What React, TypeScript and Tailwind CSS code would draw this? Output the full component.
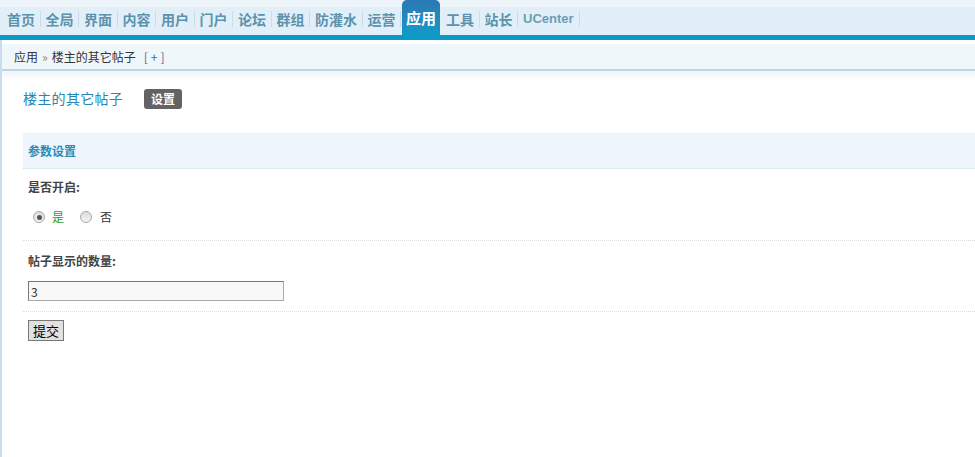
const NAV = ["首页", "全局", "界面", "内容", "用户", "门户", "论坛", "群组", "防灌水", "运营", "应用", "工具", "站长"];

const font = "font-['Microsoft_YaHei','Noto_Sans_CJK_SC',sans-serif]";

function Radio({ checked }: { checked?: boolean }) {
  return (
    <span className="flex h-[12px] w-[12px] items-center justify-center rounded-full border border-[#a9a9a9] bg-gradient-to-b from-[#dcdcdc] to-[#f4f4f4]">
      {checked && <span className="h-[5px] w-[5px] rounded-full bg-[#555]" />}
    </span>
  );
}

export default function App() {
  return (
    <div className={`h-[457px] w-[975px] overflow-hidden bg-white text-[12px] text-[#333] ${font}`}>
      {/* Top nav */}
      <div className="h-[35px] bg-[#edf5fb] pt-[7px]">
        <div className="flex h-[28px] items-stretch bg-[#e2eff8] pl-[2px]">
          {NAV.map((n) =>
            n === "应用" ? (
              <div
                key={n}
                className="-mt-[7px] ml-[1px] mr-[1px] flex h-[35px] items-center rounded-t-[5px] bg-gradient-to-b from-[#2a78b4] to-[#0f9ac7] px-[4px] pt-[2px] text-[15px] font-bold text-white"
              >
                {n}
              </div>
            ) : (
              <div key={n} className="flex items-center pb-[4px]">
                <span className="pl-[5px] pr-[4.5px] text-[14px] font-bold leading-[18px] text-[#5b93ad]">{n}</span>
                <span className="h-[16px] w-px bg-[#c9dcea]" />
              </div>
            )
          )}
          <div className="flex items-center pb-[4px]">
            <span className="pl-[5px] pr-[5px] font-['Liberation_Sans',sans-serif] text-[13px] font-bold text-[#6b9db4]">UCenter</span>
            <span className="h-[16px] w-px bg-[#c9dcea]" />
          </div>
        </div>
      </div>
      <div className="h-[5px] bg-[#0b9ac5]" />

      <div className="border-l-2 border-[#c9deec]">
        {/* Breadcrumb */}
        <div className="pt-[4px]">
          <div className="flex h-[27px] items-center border-b-2 border-[#c2d4e2] bg-[#f0f7fb] pl-[12px] text-[12px] text-[#333]">
            <span>应用</span>
            <span className="mx-[4px] text-[#888]">»</span>
            <span>楼主的其它帖子</span>
            <span className="ml-[8px] tracking-[3px] text-[#3a70a8]">[+]</span>
          </div>
          <div className="h-[10px] bg-gradient-to-b from-[#eef5fa] to-white" />
        </div>

        {/* Title */}
        <div className="flex items-center pl-[21px] pt-[7px]">
          <span className="text-[14px] tracking-[0.3px] text-[#2688b6]">楼主的其它帖子</span>
          <span className="ml-[21px] flex h-[20px] w-[38px] items-center justify-center rounded-[3px] bg-[#636363] text-[12px] font-bold text-white">
            设置
          </span>
        </div>

        {/* Settings table */}
        <div className="ml-[21px] mt-[24px]">
          <div className="flex h-[36px] items-center border-b border-dotted border-[#d6e2ea] bg-[#eef5fc] pl-[5px] text-[12px] font-bold text-[#2b8ab6]">
            参数设置
          </div>
          <div className="border-b border-dotted border-[#dcdcdc] pb-[14px] pl-[5px]">
            <div className="pt-[9px] font-bold text-[#444]">是否开启:</div>
            <div className="mt-[12px] flex items-center pl-[5px]">
              <Radio checked />
              <span className="ml-[7px] text-[#1aa51a]">是</span>
              <span className="ml-[16px]"><Radio /></span>
              <span className="ml-[8px] text-[#333]">否</span>
            </div>
          </div>
          <div className="border-b border-dotted border-[#dcdcdc] pb-[10px] pl-[5px]">
            <div className="pt-[11px] font-bold text-[#444]">帖子显示的数量:</div>
            <input
              defaultValue="3"
              className="mt-[11px] h-[20px] w-[256px] border border-[#aaa] border-t-[#777] border-l-[#777] bg-[#f8f8f8] px-[2px] text-[12px] text-[#333] outline-none"
            />
          </div>
          <div className="pl-[5px] pt-[8px]">
            <button className="h-[21px] w-[36px] border border-[#777] bg-[#e1e1e1] text-[13px] leading-[18px] text-black">
              提交
            </button>
          </div>
        </div>
        <div className="h-[200px]" />
      </div>
    </div>
  );
}
